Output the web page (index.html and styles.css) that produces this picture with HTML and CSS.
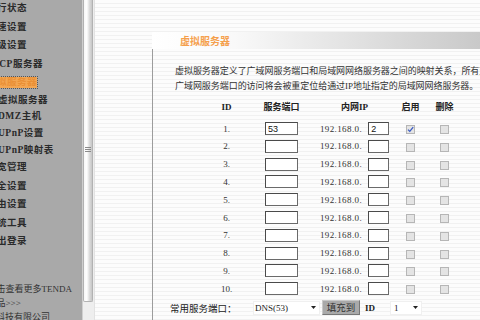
FILE: index.html
```html
<!DOCTYPE html>
<html lang="zh-CN">
<head>
<meta charset="utf-8">
<title>虚拟服务器</title>
<link rel="stylesheet" href="styles.css">
</head>
<body>
<div class="page">
  <nav class="side">
    <ul class="menu">
      <li class="item">运行状态</li>
      <li class="item">快速设置</li>
      <li class="item">高级设置</li>
      <li class="item dhcp">DHCP服务器</li>
      <li class="item"><span class="current">虚拟服务器</span></li>
      <li class="item sub">虚拟服务器</li>
      <li class="item sub">DMZ主机</li>
      <li class="item sub">UPnP设置</li>
      <li class="item sub">UPnP映射表</li>
      <li class="item">带宽管理</li>
      <li class="item">安全设置</li>
      <li class="item">路由设置</li>
      <li class="item">系统工具</li>
      <li class="item">退出登录</li>
    </ul>
    <div class="foot">
      <div class="foot-line">点击查看更多TENDA</div>
      <div class="foot-line">产品&gt;&gt;&gt;</div>
      <div class="foot-line company">深圳市吉祥腾达科技有限公司</div>
    </div>
  </nav>
  <div class="scrollbar"><div class="thumb"><span class="grip"></span></div></div>
  <main class="content">
    <section class="panel">
      <h1 class="panel-title">虚拟服务器</h1>
      <div class="panel-body">
        <p class="desc">虚拟服务器定义了广域网服务端口和局域网网络服务器之间的映射关系，所有对<br>广域网服务端口的访问将会被重定位给通过IP地址指定的局域网网络服务器。</p>
        <div class="grid">
          <div class="hd latin">ID</div><div class="hd">服务端口</div><div class="hd">内网<span class="latin">IP</span></div><div class="hd">启用</div><div class="hd">删除</div>

          <div class="cell num">1.</div><div class="cell"><input class="box" type="text" value="53"></div><div class="cell ip"><span class="ipt">192.168.0.</span><input class="box small" type="text" value="2"></div><div class="cell"><span class="cb on"><svg viewBox="0 0 9 9" width="9" height="9"><path d="M2 4.6 L3.8 6.4 L7.2 2.2" fill="none" stroke="#3b5cc4" stroke-width="1.3"/></svg></span></div><div class="cell"><span class="cb"></span></div>

          <div class="cell num">2.</div><div class="cell"><input class="box" type="text"></div><div class="cell ip"><span class="ipt">192.168.0.</span><input class="box small" type="text"></div><div class="cell"><span class="cb"></span></div><div class="cell"><span class="cb"></span></div>

          <div class="cell num">3.</div><div class="cell"><input class="box" type="text"></div><div class="cell ip"><span class="ipt">192.168.0.</span><input class="box small" type="text"></div><div class="cell"><span class="cb"></span></div><div class="cell"><span class="cb"></span></div>

          <div class="cell num">4.</div><div class="cell"><input class="box" type="text"></div><div class="cell ip"><span class="ipt">192.168.0.</span><input class="box small" type="text"></div><div class="cell"><span class="cb"></span></div><div class="cell"><span class="cb"></span></div>

          <div class="cell num">5.</div><div class="cell"><input class="box" type="text"></div><div class="cell ip"><span class="ipt">192.168.0.</span><input class="box small" type="text"></div><div class="cell"><span class="cb"></span></div><div class="cell"><span class="cb"></span></div>

          <div class="cell num">6.</div><div class="cell"><input class="box" type="text"></div><div class="cell ip"><span class="ipt">192.168.0.</span><input class="box small" type="text"></div><div class="cell"><span class="cb"></span></div><div class="cell"><span class="cb"></span></div>

          <div class="cell num">7.</div><div class="cell"><input class="box" type="text"></div><div class="cell ip"><span class="ipt">192.168.0.</span><input class="box small" type="text"></div><div class="cell"><span class="cb"></span></div><div class="cell"><span class="cb"></span></div>

          <div class="cell num">8.</div><div class="cell"><input class="box" type="text"></div><div class="cell ip"><span class="ipt">192.168.0.</span><input class="box small" type="text"></div><div class="cell"><span class="cb"></span></div><div class="cell"><span class="cb"></span></div>

          <div class="cell num">9.</div><div class="cell"><input class="box" type="text"></div><div class="cell ip"><span class="ipt">192.168.0.</span><input class="box small" type="text"></div><div class="cell"><span class="cb"></span></div><div class="cell"><span class="cb"></span></div>

          <div class="cell num">10.</div><div class="cell"><input class="box" type="text"></div><div class="cell ip"><span class="ipt">192.168.0.</span><input class="box small" type="text"></div><div class="cell"><span class="cb"></span></div><div class="cell"><span class="cb"></span></div>
        </div>
        <div class="common">
          <span class="label">常用服务端口：</span>
          <div class="sel wide"><span>DNS(53)</span><svg class="arrow" viewBox="0 0 5 3" width="5" height="3"><path d="M0 0 H5 L2.5 3 Z" fill="#222"/></svg></div>
          <button class="btn" type="button">填充到</button>
          <span class="idl">ID</span>
          <div class="sel narrow"><span>1</span><svg class="arrow" viewBox="0 0 5 3" width="5" height="3"><path d="M0 0 H5 L2.5 3 Z" fill="#222"/></svg></div>
        </div>
      </div>
    </section>
  </main>
</div>
</body>
</html>
```
FILE: styles.css
```css
* { box-sizing: border-box; margin: 0; padding: 0; }
html, body { width: 480px; height: 320px; overflow: hidden; }
body {
  font-family: "Liberation Serif", "Noto Sans CJK SC", serif;
  color: #333;
  background: #fafafa;
}
.page { display: flex; height: 320px; }

/* sidebar */
.side {
  width: 82px;
  flex: none;
  background: #a9a9a9;
  overflow: hidden;
  white-space: nowrap;
}
.menu {
  list-style: none;
  margin-top: -1px;
  font-weight: bold;
  font-size: 9.5px;
  letter-spacing: 0.5px;
  color: #2a2a2a;
}
.item { height: 18.5px; line-height: 18.5px; margin-left: -13px; }
.item.dhcp { margin-left: -16px; }
.item.sub { height: 16.7px; line-height: 16.7px; margin-left: -2px; }
.current {
  display: inline-block;
  height: 11px;
  line-height: 11px;
  vertical-align: middle;
  background: #f4a651;
  color: #ea9036;
  outline: 1px dotted #555;
}
.foot {
  margin-top: 31.2px;
  font-size: 9px;
  line-height: 14px;
  color: #333;
}
.foot-line { margin-left: -12.5px; }
.foot-line.company { margin-left: -67px; }

/* scroll strip */
.scrollbar {
  width: 13px;
  flex: none;
  background: #eeeeee;
  border-left: 1px solid #cfcfcf;
  border-right: 1px solid #e2e2e2;
}
.thumb {
  height: 302px;
  margin-right: 1px;
  background: linear-gradient(to right, #f7f7f7 0%, #ffffff 35%, #dadada 70%, #c6c6c6 100%);
  border: 1px solid #b2b2b2;
  border-top: none;
  border-radius: 0 0 2px 2px;
  display: flex;
  align-items: center;
  justify-content: center;
}
.grip {
  width: 6px;
  height: 6px;
  margin-top: -2px;
  background: repeating-linear-gradient(to bottom, #8a8a8a 0 1px, transparent 1px 2px);
}

/* content */
.content {
  flex: 1;
  min-width: 0;
  overflow: hidden;
  padding: 32px 0 0 57px;
  background: repeating-linear-gradient(to bottom, #fcfcfc 0 3px, #f1f1f1 3px 4px);
}
.panel { width: 328px; }
.panel-title {
  height: 17px;
  line-height: 17px;
  padding-left: 28px;
  font-family: "Noto Sans CJK SC", sans-serif;
  font-size: 10px;
  font-weight: bold;
  color: #f5a04c;
  background: linear-gradient(to right, #ffffff 0%, #f9f9f9 25%, #c9c9c9 100%);
}
.panel-body {
  border-left: 1px solid #9c9c9c;
  min-height: 271px;
  padding: 14.5px 0 0 22px;
}
.desc {
  font-family: "Liberation Serif", "Noto Sans CJK SC", serif;
  font-size: 9px;
  line-height: 15px;
  letter-spacing: -0.05px;
  white-space: nowrap;
  color: #333;
}

.grid {
  margin: 3.2px 0 0 25px;
  display: grid;
  grid-template-columns: 53px 57px 89px 23px 45px;
  grid-template-rows: 23px;
  grid-auto-rows: 17.8px;
}
.hd {
  display: flex;
  align-items: center;
  justify-content: center;
  padding-bottom: 3px;
  font-size: 9px;
  font-weight: bold;
  color: #222;
  white-space: nowrap;
}
.cell {
  display: flex;
  align-items: center;
  justify-content: center;
}
.num { font-size: 9px; color: #333; }
.ip { gap: 6px; }
.ipt { font-size: 9px; letter-spacing: 0.4px; color: #333; white-space: nowrap; }
.box {
  width: 33px;
  height: 13px;
  border: 1px solid #6a6a6a;
  border-top-color: #4a4a4a;
  border-left-color: #4a4a4a;
  background: #fff;
  padding: 0 2px;
  font-family: "Liberation Sans", sans-serif;
  font-size: 9px;
  color: #111;
  outline: none;
}
.box.small { width: 21px; }
.cb {
  width: 9px;
  height: 9px;
  margin-top: 2px;
  border: 1px solid #b6b6b6;
  background: #e4e4e4;
  display: flex;
  align-items: center;
  justify-content: center;
}
.cb svg { flex: none; }

.common {
  margin-left: -5px;
  height: 20px;
  display: flex;
  align-items: center;
  white-space: nowrap;
}
.label {
  width: 83px;
  font-family: "Noto Sans CJK SC", sans-serif;
  font-size: 9.5px;
  color: #222;
}
.sel {
  height: 14px;
  background: #fff;
  border: 1px solid #f0f0f0;
  display: flex;
  align-items: center;
  justify-content: space-between;
  padding: 0 3px 0 1px;
  font-size: 9px;
  color: #222;
}
.sel.wide { width: 67px; }
.sel.narrow { width: 32px; margin-left: 15px; padding-left: 3px; }
.arrow { flex: none; }
.btn {
  width: 38px;
  height: 15px;
  margin-left: 2px;
  background: #a9a9a9;
  border: 1px solid;
  border-color: #c9c9c9 #777 #777 #c9c9c9;
  font-family: "Noto Sans CJK SC", sans-serif;
  font-size: 9.5px;
  line-height: 13px;
  color: #333;
  padding: 0;
}
.idl {
  width: 10px;
  margin-left: 5px;
  font-size: 9px;
  font-weight: bold;
  color: #222;
}
```
